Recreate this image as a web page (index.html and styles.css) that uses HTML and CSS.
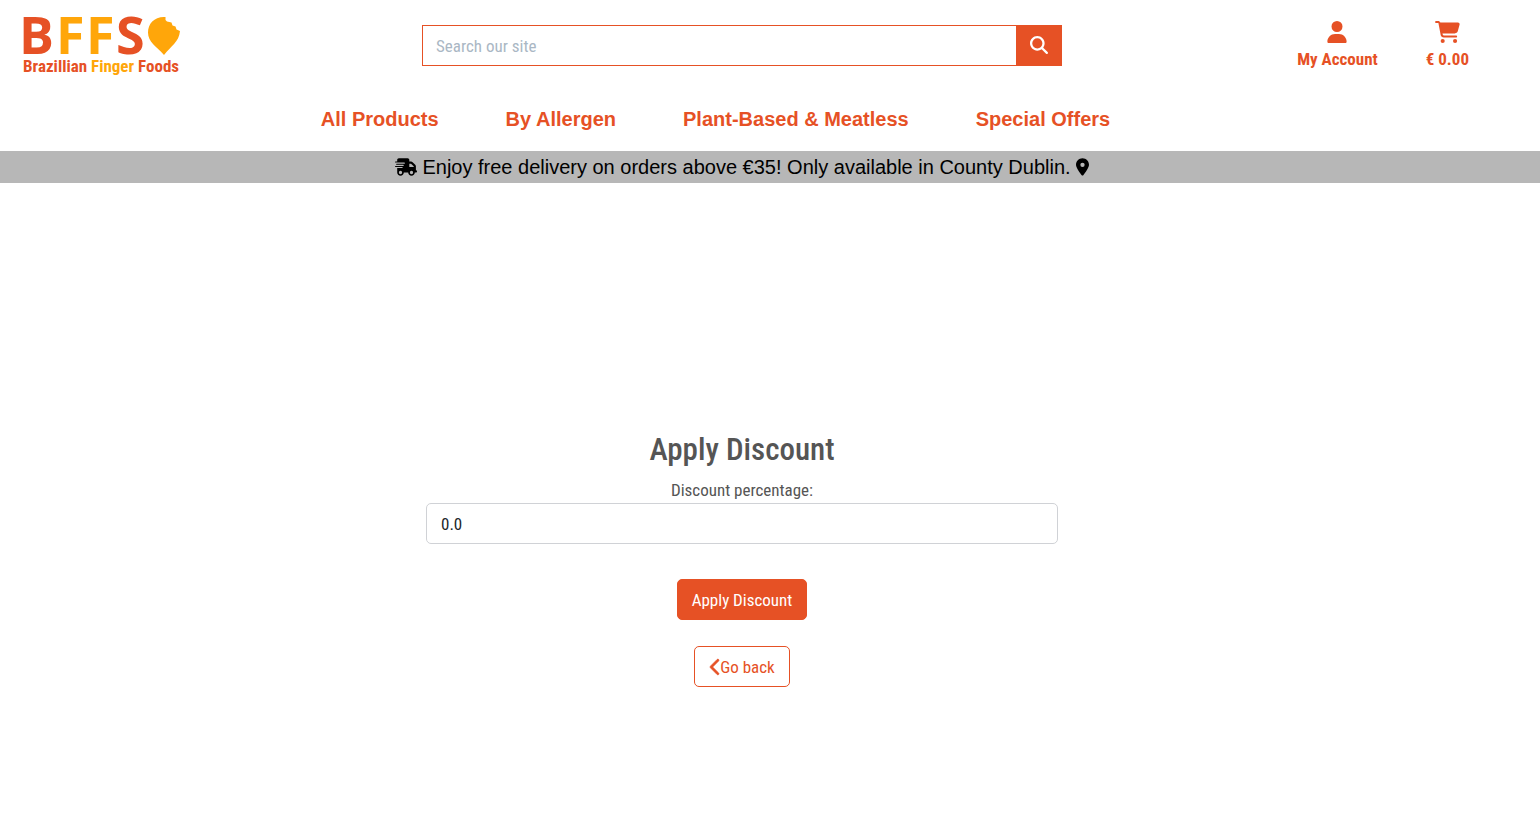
FILE: index.html
```html
<!DOCTYPE html>
<html lang="en">
<head>
<meta charset="utf-8">
<meta name="viewport" content="width=device-width, initial-scale=1">
<title>Apply Discount</title>
<link rel="stylesheet" href="styles.css">
</head>
<body>
<header class="header">
  <a class="logo" href="#" aria-label="Brazillian Finger Foods home">
    <svg class="logo-art" viewBox="0 0 160 62" width="160" height="62">
      <g class="logo-letters">
        <text class="red" x="-4" y="39">B</text>
        <text class="gold" x="33" y="39">F</text>
        <text class="gold" x="63" y="39">F</text>
        <text class="red" x="93" y="39">S</text>
      </g>
      <path class="gold" d="M141 2C131 2 125 9 125 17.500C125 27 133 31 141 40C148 31 156 27 157 16L153.500 14.500L152.500 11.500L149.500 10.500L148.500 7.500L144 6.500L142.500 5L142.500 2Z"/>
      <text class="logo-tagline red" x="0" y="57">Brazillian <tspan class="gold">Finger</tspan> Foods</text>
    </svg>
  </a>
  <form class="search" role="search">
    <input class="search-input" type="search" placeholder="Search our site" aria-label="Search our site">
    <button class="search-button" type="button" aria-label="Search">
      <svg viewBox="0 0 512 512" width="18" height="18"><path d="M416 208c0 45.9-14.9 88.3-40 122.7L502.6 457.4c12.5 12.5 12.5 32.8 0 45.3s-32.8 12.5-45.3 0L330.7 376c-34.4 25.2-76.8 40-122.7 40C93.1 416 0 322.9 0 208S93.1 0 208 0S416 93.1 416 208zM208 352a144 144 0 1 0 0-288 144 144 0 1 0 0 288z"/></svg>
    </button>
  </form>
  <div class="actions">
    <a class="action" href="#">
      <svg viewBox="0 0 448 512" width="20" height="22"><path d="M224 256A128 128 0 1 0 224 0a128 128 0 1 0 0 256zm-45.7 48C79.8 304 0 383.8 0 482.3C0 498.7 13.3 512 29.7 512H418.3c16.4 0 29.7-13.3 29.7-29.7C448 383.8 368.2 304 269.7 304H178.3z"/></svg>
      <span>My Account</span>
    </a>
    <a class="action" href="#">
      <svg viewBox="0 0 576 512" width="25" height="22"><path d="M0 24C0 10.7 10.7 0 24 0H69.5c22 0 41.5 12.8 50.6 32h411c26.3 0 45.5 25 38.6 50.4l-41 152.3c-8.5 31.4-37 53.3-69.5 53.3H170.7l5.4 28.5c2.2 11.3 12.1 19.5 23.6 19.5H488c13.3 0 24 10.7 24 24s-10.7 24-24 24H199.7c-34.6 0-64.3-24.6-70.7-58.5L77.4 54.5c-.7-3.8-4-6.5-7.9-6.5H24C10.7 48 0 37.3 0 24zM128 464a48 48 0 1 1 96 0 48 48 0 1 1 -96 0zm336-48a48 48 0 1 1 0 96 48 48 0 1 1 0-96z"/></svg>
      <span>€ 0.00</span>
    </a>
  </div>
</header>
<nav class="nav">
  <a href="#">All Products</a>
  <a href="#">By Allergen</a>
  <a href="#">Plant-Based &amp; Meatless</a>
  <a href="#">Special Offers</a>
</nav>
<div class="banner">
  <svg viewBox="0 0 640 512" width="22" height="18"><path d="M112 0C85.5 0 64 21.5 64 48V96H16c-8.8 0-16 7.2-16 16s7.2 16 16 16H64 272c8.8 0 16 7.2 16 16s-7.2 16-16 16H64 48c-8.8 0-16 7.2-16 16s7.2 16 16 16H64 240c8.8 0 16 7.2 16 16s-7.2 16-16 16H64 16c-8.8 0-16 7.2-16 16s7.2 16 16 16H64 208c8.8 0 16 7.2 16 16s-7.2 16-16 16H64V416c0 53 43 96 96 96s96-43 96-96H384c0 53 43 96 96 96s96-43 96-96h32c17.7 0 32-14.3 32-32s-14.3-32-32-32V288 256 237.3c0-17-6.7-33.3-18.7-45.3L512 114.7c-12-12-28.3-18.7-45.3-18.7H416V48c0-26.5-21.5-48-48-48H112zM544 237.3V256H416V160h50.7L544 237.3zM160 368a48 48 0 1 1 0 96 48 48 0 1 1 0-96zm272 48a48 48 0 1 1 96 0 48 48 0 1 1 -96 0z"/></svg>
  <p>Enjoy free delivery on orders above €35! Only available in County Dublin.</p>
  <svg viewBox="0 0 384 512" width="13" height="18"><path d="M215.7 499.2C267 435 384 279.4 384 192C384 86 298 0 192 0S0 86 0 192c0 87.4 117 243 168.3 307.2c12.3 15.3 35.1 15.3 47.4 0zM192 128a64 64 0 1 1 0 128 64 64 0 1 1 0-128z"/></svg>
</div>
<main class="main">
  <form class="discount">
    <h1>Apply Discount</h1>
    <label for="percentage">Discount percentage:</label>
    <input class="field" id="percentage" type="text" inputmode="decimal" value="0.0">
    <button class="button button-solid" type="button">Apply Discount</button>
    <a class="button button-outline" href="#">
      <svg viewBox="0 0 256 512" width="11" height="18"><path stroke="currentColor" stroke-width="16" d="M9.4 233.4c-12.5 12.5-12.5 32.8 0 45.3l192 192c12.5 12.5 32.8 12.5 45.3 0s12.5-32.8 0-45.3L77.3 256 246.6 86.6c12.5-12.5 12.5-32.8 0-45.3s-32.8-12.5-45.3 0l-192 192z"/></svg>Go back</a>
  </form>
</main>
</body>
</html>
```

FILE: styles.css
```css
:root {
  --brand: #e65125;
  --gold: #ffa60a;
  --condensed: "Roboto Condensed", "Liberation Sans Narrow", Roboto, sans-serif;
}

* { box-sizing: border-box; }

body {
  margin: 0;
  min-height: 100vh;
  display: flex;
  flex-direction: column;
  background: #fff;
  color: #555;
  font: 17px/25px var(--condensed);
}

svg { fill: currentColor; flex: none; overflow: visible; }
a { color: var(--brand); text-decoration: none; }
h1, p { margin: 0; }
input, button { font: inherit; }

.header {
  display: grid;
  grid-template-columns: 1fr minmax(0, 640px) 1fr;
  align-items: center;
  padding: 15px 71px 14px 15px;
}

.logo { padding-left: 8px; }
.logo, .logo-art { display: block; }
.logo-letters { font: 700 52px "Open Sans", sans-serif; }
.logo-tagline { font: 700 17px var(--condensed); }
.red { fill: var(--brand); }
.gold { fill: var(--gold); }

.search { display: flex; height: 41px; margin-bottom: 2px; }

.search-input {
  flex: 1;
  min-width: 0;
  padding: 2px 13px 0;
  border: 1px solid var(--brand);
  border-right: 0;
  border-radius: 0;
  background: #fff;
  appearance: none;
}

.search-input::placeholder { color: #aab7c4; opacity: 1; }

.search-button {
  display: flex;
  align-items: center;
  justify-content: center;
  width: 46px;
  padding: 0;
  border: 0;
  background: var(--brand);
  color: #fff;
}

.actions { display: flex; justify-content: flex-end; gap: 48px; }

.action {
  display: flex;
  flex-direction: column;
  align-items: center;
  gap: 4px;
  font-weight: 700;
}

.nav {
  display: flex;
  justify-content: center;
  gap: 67px;
  padding: 12px 109px 16px 0;
  font: 700 20px/32px "Liberation Sans", Arial, sans-serif;
}

.banner {
  display: flex;
  align-items: center;
  justify-content: center;
  gap: 5px;
  padding-right: 56px;
  background: #b7b7b7;
  color: #000;
  font: 20px/32px "Liberation Sans", Arial, sans-serif;
}

.main {
  flex: 1;
  display: flex;
  align-items: center;
  justify-content: center;
  padding: 116px 56px 0 0;
}

.discount {
  display: flex;
  flex-direction: column;
  align-items: center;
  width: 632px;
}

.discount h1 { margin-bottom: 8px; font-size: 31px; line-height: 40px; font-weight: 500; }

.field {
  width: 100%;
  height: 41px;
  margin-bottom: 35px;
  padding: 2px 14px 0;
  border: 1px solid #d0d2d6;
  border-radius: 5px;
  background: #fff;
  color: #212529;
}

.button {
  display: flex;
  align-items: center;
  height: 41px;
  padding: 2px 14px 0;
  border: 1px solid var(--brand);
  border-radius: 5px;
}

.button-solid { margin-bottom: 26px; background: var(--brand); color: #fff; }
.button-outline { background: #fff; }
```
